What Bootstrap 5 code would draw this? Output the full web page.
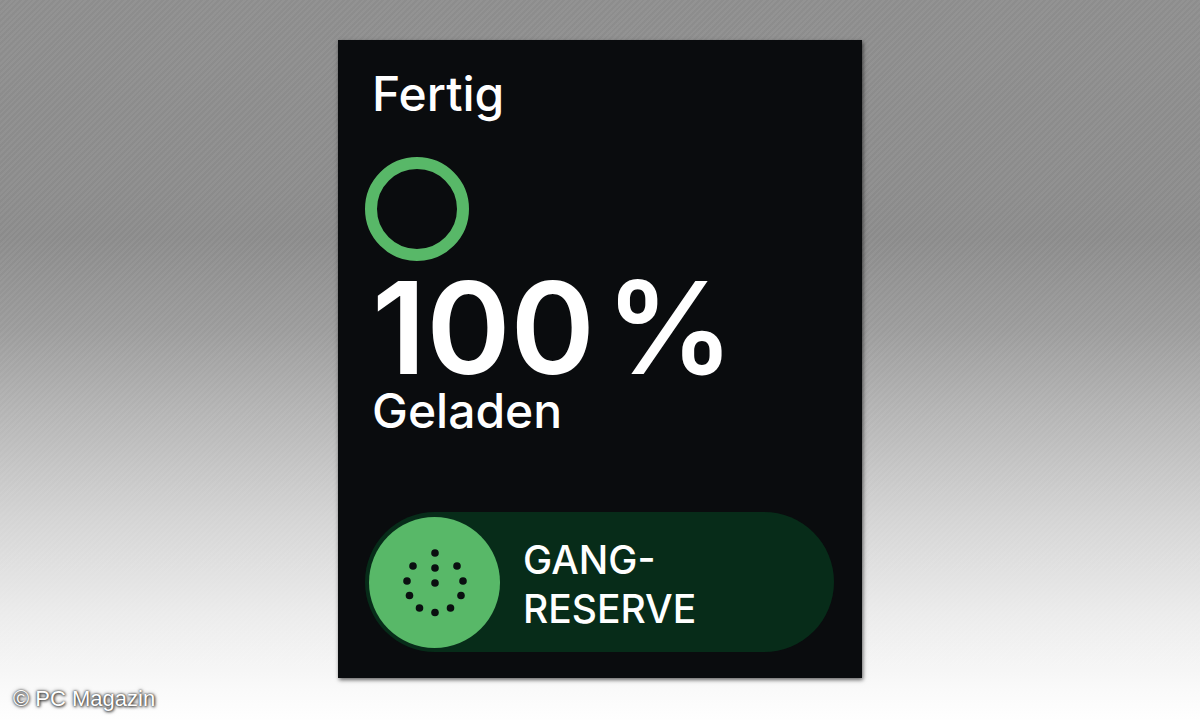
<!DOCTYPE html>
<html lang="de">
<head>
<meta charset="utf-8">
<meta name="viewport" content="width=device-width, initial-scale=1">
<title>Gangreserve</title>
<link href="https://cdn.jsdelivr.net/npm/bootstrap@5.3.0/dist/css/bootstrap.min.css" rel="stylesheet">
<style>
  body {
    font-family: Inter, "Liberation Sans", sans-serif;
    font-weight: 500;
    background:
      repeating-linear-gradient(135deg, rgba(255,255,255,.05) 0 2px, rgba(255,255,255,0) 2px 4px),
      linear-gradient(to bottom, #8d8d8d 0, #8b8b8b 33%, #9c9c9c 46%, #b4b4b4 57%, #d4d4d4 72%, #ebebeb 85%, #fafafa 96%, #fefefe 100%);
  }
  .watch {
    width: 100%;
    max-width: 524px;
    padding: 26px 28px 26px 27px;
    color: #fff;
    background: #0a0c0e;
    box-shadow: 1px 2px 4px rgba(0,0,0,.6);
  }
  .indent { padding-left: 7px; }
  .label-text { font-size: 48px; line-height: 56px; font-weight: 500; color: #fff; }
  .charge-ring { width: 104px; height: 104px; margin-top: 35px; border: 12px solid #58b868; }
  .charge-value { font-size: 128px; line-height: 110px; font-weight: 600; margin-top: 12px; white-space: nowrap; }
  .reserve {
    margin-top: 73px;
    padding: 4px;
    gap: 23px;
    min-height: 140px;
    background: #072c19;
    font-size: 39px;
    line-height: 49px;
    color: #fff;
  }
  .knob { width: 131px; height: 131px; background: #58b868; }
  .credit {
    font-family: "Liberation Sans", sans-serif;
    font-size: 22px;
    line-height: 24px;
    font-weight: 400;
    padding: 9px 13px;
    color: #fff;
    text-shadow: 0 0 2px #333, 1px 1px 3px #444, 0 0 4px #777;
  }
</style>
</head>
<body class="min-vh-100 d-flex flex-column">
<main class="watch mx-auto mt-auto d-flex flex-column align-items-start">
  <a href="#" class="label-text indent text-decoration-none">Fertig</a>
  <div class="charge-ring rounded-circle" role="img" aria-label="Batterie voll"></div>
  <div class="charge-value indent">100&#8202;%</div>
  <div class="label-text indent">Geladen</div>
  <button type="button" class="reserve rounded-pill border-0 w-100 d-flex align-items-center text-start fw-medium">
    <span class="knob rounded-circle flex-shrink-0">
      <svg class="d-block" width="131" height="131" viewBox="0 0 131 131" fill="#0a0f10" aria-hidden="true">
        <circle cx="66" cy="36" r="3.8"/><circle cx="66" cy="51" r="3.8"/><circle cx="66" cy="66" r="3.8"/>
        <circle cx="44" cy="49" r="3.8"/><circle cx="88" cy="49" r="3.8"/>
        <circle cx="38" cy="64" r="3.8"/><circle cx="94" cy="64" r="3.8"/>
        <circle cx="40.500" cy="78.500" r="3.8"/><circle cx="92" cy="78.500" r="3.8"/>
        <circle cx="50.500" cy="91" r="3.8"/><circle cx="81.500" cy="91" r="3.8"/>
        <circle cx="66" cy="95.500" r="3.8"/>
      </svg>
    </span>
    <span class="pt-1">GANG-<br>RESERVE</span>
  </button>
</main>
<footer class="credit">© PC Magazin</footer>
<script src="https://cdn.jsdelivr.net/npm/bootstrap@5.3.0/dist/js/bootstrap.bundle.min.js"></script>
</body>
</html>
